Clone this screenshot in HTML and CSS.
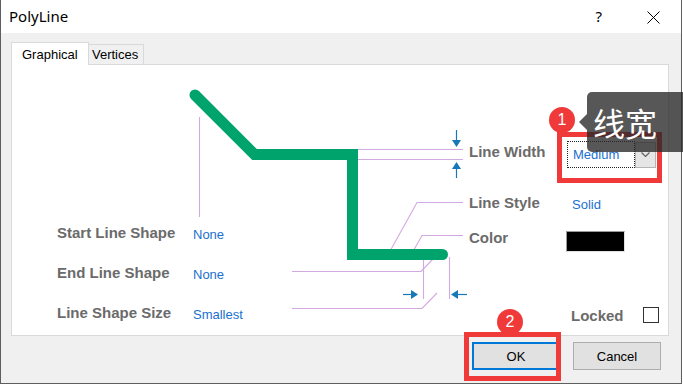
FILE: index.html
```html
<!DOCTYPE html>
<html>
<head>
<meta charset="utf-8">
<link rel="stylesheet" href="styles.css">
</head>
<body>
<div class="screen">
  <div class="window">
    <div class="titlebar">
      <span class="title">PolyLine</span>
      <span class="help">?</span>
      <svg class="close" width="13" height="13" viewBox="0 0 13 13"><path d="M0.5 0.5 L12.5 12.5 M12.5 0.5 L0.5 12.5" stroke="#000" stroke-width="1" fill="none"/></svg>
    </div>
    <div class="body">
      <div class="tabs">
        <div class="tab active">Graphical</div>
        <div class="tab">Vertices</div>
      </div>
      <div class="panel">
        <svg class="diagram" width="656" height="270" viewBox="12 65 656 270">
          <g stroke="#d3a9e2" stroke-width="1.1" fill="none">
            <path d="M199.5 117 V217"/>
            <path d="M358 149.5 H463 M358 159.5 H463"/>
            <polyline points="463,202.5 417,202.5 389,253"/>
            <polyline points="463,235.5 422,235.5 411,255"/>
            <polyline points="292,271.5 421,271.5 433,259"/>
            <polyline points="292,308.5 422,308.5 437,293"/>
            <path d="M423.5 259 V299 M449.5 257 V299"/>
          </g>
          <polyline points="195,95 254.5,154.5 352.5,154.5 352.5,254.5 442.5,254.5" fill="none" stroke="#00a36c" stroke-width="11" stroke-linecap="round" stroke-linejoin="miter"/>
          <g stroke="#1778b8" stroke-width="1.2" fill="#1778b8">
            <path d="M456.5 130 V141"/>
            <path d="M452 140 H461 L456.5 147 Z" stroke="none"/>
            <path d="M452 169 H461 L456.5 162 Z" stroke="none"/>
            <path d="M456.5 168 V178"/>
            <path d="M403 294.5 H412"/>
            <path d="M411 290 V299 L418 294.5 Z" stroke="none"/>
            <path d="M458 290 V299 L451 294.5 Z" stroke="none"/>
            <path d="M457 294.5 H467"/>
          </g>
        </svg>
        <div class="props-left">
          <div class="row"><span class="label">Start Line Shape</span><span class="value">None</span></div>
          <div class="row"><span class="label">End Line Shape</span><span class="value">None</span></div>
          <div class="row"><span class="label">Line Shape Size</span><span class="value">Smallest</span></div>
        </div>
        <div class="props-right">
          <div class="prop prop-width">
            <span class="label">Line Width</span>
            <div class="combo">
              <span class="combo-field">Medium</span>
              <span class="combo-btn"><svg width="9" height="6" viewBox="0 0 9 6"><path d="M0.5 0.5 L4.5 4.5 L8.5 0.5" stroke="#606060" stroke-width="1.2" fill="none"/></svg></span>
            </div>
          </div>
          <div class="prop prop-style">
            <span class="label">Line Style</span>
            <span class="value">Solid</span>
          </div>
          <div class="prop prop-color">
            <span class="label">Color</span>
            <span class="swatch"></span>
          </div>
          <div class="prop prop-locked">
            <span class="label">Locked</span>
            <span class="checkbox"></span>
          </div>
        </div>
      </div>
      <div class="buttons">
        <button class="btn default">OK</button>
        <button class="btn">Cancel</button>
      </div>
    </div>
  </div>

  <div class="mark mark-1"></div>
  <div class="mark mark-2"></div>
  <div class="badge badge-1">1</div>
  <div class="badge badge-2">2</div>
  <div class="tip">线宽</div>
</div>
</body>
</html>
```
FILE: styles.css
```css
html, body {
  margin: 0;
  padding: 0;
  background: #ffffff;
}

.screen {
  position: relative;
  width: 683px;
  height: 385px;
  overflow: hidden;
  font-family: "Liberation Sans", Arial, sans-serif;
}

.window {
  width: 682px;
  height: 384px;
  box-sizing: border-box;
  border: 1px solid #5e5e5e;
  border-top: none;
  background: #f0f0f0;
  display: flex;
  flex-direction: column;
}

.titlebar {
  height: 33px;
  background: #ffffff;
  display: flex;
  align-items: center;
  padding-left: 8px;
  flex: 0 0 auto;
}

.title {
  font-family: "Noto Sans", "Liberation Sans", sans-serif;
  font-size: 15px;
  color: #000;
  flex: 1;
  margin-top: -1px;
}

.help {
  font-family: "Noto Sans", "Liberation Sans", sans-serif;
  font-size: 15px;
  color: #000;
  margin-right: 45px;
  margin-top: -1px;
}

.close {
  margin-right: 21px;
  margin-top: 1px;
}

.body {
  flex: 1;
  padding: 9px 12px 0 10px;
}

.tabs {
  display: flex;
  align-items: flex-end;
  height: 22px;
}

.tab {
  box-sizing: border-box;
  font-size: 13px;
  color: #000;
  border: 1px solid #d9d9d9;
  border-bottom: none;
  height: 20px;
  line-height: 19px;
  padding: 0 3px;
  background: #f0f0f0;
}

.tab.active {
  position: relative;
  z-index: 1;
  height: 23px;
  margin-bottom: -1px;
  width: 78px;
  padding: 2px 0 0 10px;
  background: #ffffff;
  line-height: 20px;
}

.tab + .tab {
  margin-left: -1px;
  width: 56px;
}

.panel {
  position: relative;
  display: flex;
  width: 658px;
  height: 272px;
  box-sizing: border-box;
  border: 1px solid #d9d9d9;
  background: #ffffff;
}

.diagram {
  position: absolute;
  left: 0;
  top: 0;
}

.label {
  font-weight: bold;
  font-size: 15px;
  line-height: 16px;
  color: #6b6b6b;
  white-space: nowrap;
}

.value {
  font-size: 13px;
  line-height: 16px;
  color: #1a70d0;
}

.props-left {
  position: relative;
  flex: 0 0 457px;
  box-sizing: border-box;
  padding: 160px 0 0 45px;
}

.props-left .row {
  display: flex;
  height: 40px;
}

.props-left .label {
  width: 136px;
}

.props-left .value {
  padding-top: 2px;
}

.props-right {
  position: relative;
  display: flex;
  flex-direction: column;
  padding-top: 76px;
}

.prop {
  display: flex;
}

.prop .label {
  width: 98px;
}

.prop-width {
  height: 27px;
}

.prop-width .label {
  padding-top: 3px;
}

.combo {
  display: flex;
}

.combo-field {
  box-sizing: border-box;
  width: 68px;
  height: 27px;
  border: 1px dotted #222;
  padding-left: 5px;
  font-size: 13px;
  line-height: 26px;
  color: #1a70d0;
}

.combo-btn {
  box-sizing: border-box;
  width: 21px;
  height: 26px;
  margin-top: 1px;
  border: 1px solid #b5b5b5;
  background: #e6e6e6;
  display: flex;
  align-items: center;
  justify-content: center;
}

.prop-style {
  margin-top: 27px;
  height: 16px;
}

.prop-style .value {
  padding: 2px 0 0 5px;
}

.prop-color {
  margin-top: 19px;
  height: 22px;
}

.swatch {
  box-sizing: border-box;
  width: 59px;
  height: 21px;
  margin: 1px 0 0 -1px;
  background: #000;
  border: 1px solid #9a9a9a;
  border-right-color: #e0e0e0;
  border-bottom-color: #e0e0e0;
}

.prop-locked {
  margin-top: 55px;
  height: 17px;
}

.prop-locked .label {
  width: 72px;
  margin-left: 102px;
  padding-top: 1px;
}

.checkbox {
  box-sizing: border-box;
  width: 16px;
  height: 16px;
  border: 1px solid #333;
  background: #fff;
}

.buttons {
  display: flex;
  justify-content: flex-end;
  gap: 13px;
  margin-top: 6px;
  padding-right: 8px;
  width: 658px;
  box-sizing: border-box;
}

.btn {
  box-sizing: border-box;
  width: 88px;
  height: 28px;
  margin: 0;
  padding: 0;
  font-family: "Liberation Sans", Arial, sans-serif;
  font-size: 13px;
  color: #000;
  background: #e1e1e1;
  border: 1px solid #adadad;
}

.btn.default {
  border: 2px solid #0078d7;
}

.mark {
  position: absolute;
  box-sizing: border-box;
  border: 5px solid #f03a3a;
}

.mark-1 {
  left: 557px;
  top: 132px;
  width: 105px;
  height: 51px;
}

.mark-2 {
  left: 464px;
  top: 332px;
  width: 97px;
  height: 49px;
}

.badge {
  position: absolute;
  width: 26px;
  height: 26px;
  border-radius: 50%;
  background: #f03a3a;
  color: #fff;
  font-size: 16px;
  line-height: 26px;
  text-align: center;
}

.badge-1 {
  left: 549px;
  top: 107px;
}

.badge-2 {
  left: 497px;
  top: 309px;
}

.tip {
  position: absolute;
  left: 587px;
  top: 92px;
  width: 110px;
  height: 60px;
  box-sizing: border-box;
  border-radius: 5px;
  background: rgba(40, 40, 40, 0.78);
  color: #fff;
  font-family: "Noto Sans CJK SC", "Noto Sans", sans-serif;
  font-size: 32px;
  line-height: 60px;
  padding-left: 6px;
}

.tip::before {
  content: "";
  position: absolute;
  left: -8px;
  top: 22px;
  border-style: solid;
  border-width: 8px 8px 8px 0;
  border-color: transparent rgba(40, 40, 40, 0.78) transparent transparent;
}
```
